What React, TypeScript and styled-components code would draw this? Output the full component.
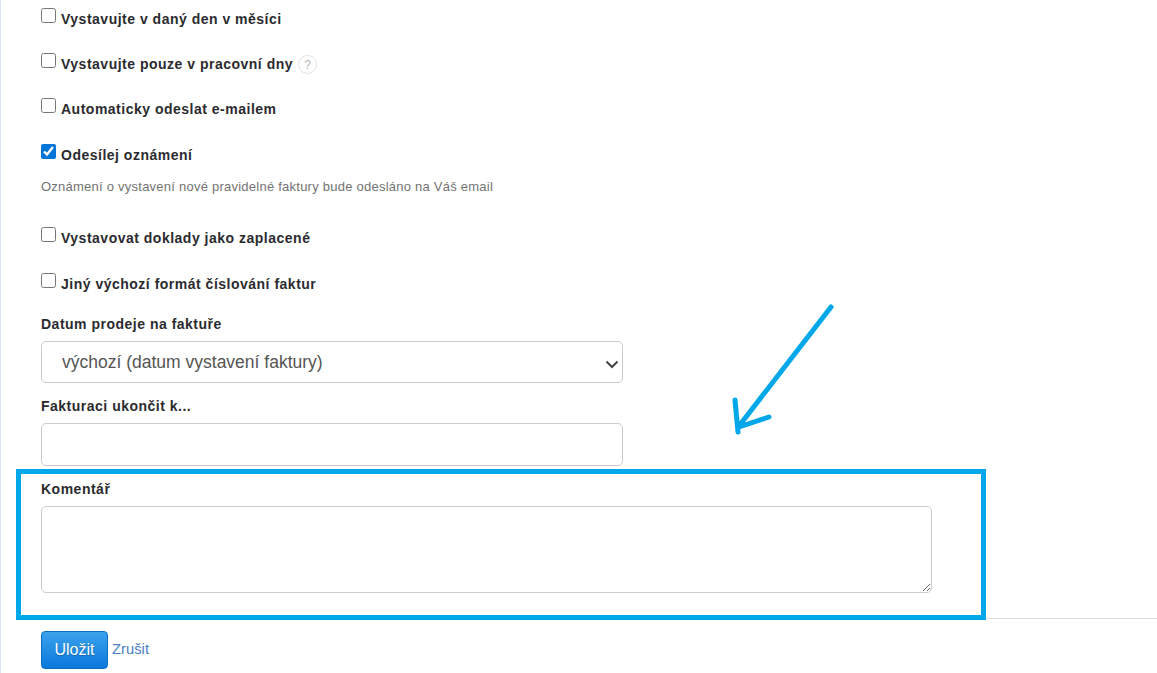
import React from "react";
import styled, { createGlobalStyle } from "styled-components";

const Global = createGlobalStyle`
  html, body { margin: 0; padding: 0; background: #fff; height: 673px; overflow: hidden; }
  * { box-sizing: border-box; }
`;

const Page = styled.div`
  position: relative;
  width: 1157px;
  height: 673px;
  overflow: hidden;
  border-left: 1px solid #dbe5ef;
  font-family: "Liberation Sans", Arial, sans-serif;
  color: #333;
`;

const Form = styled.form`
  display: flex;
  flex-direction: column;
  padding: 0 0 0 40px;
`;

const CheckRow = styled.label<{ $h: number }>`
  display: flex;
  align-items: flex-start;
  height: ${(p) => p.$h}px;
  font-size: 14px;
  font-weight: 700;
  line-height: 20px;
  letter-spacing: 0.5px;
  color: #2b2b2f;
`;

const Check = styled.input.attrs({ type: "checkbox" })`
  width: 15px;
  height: 15px;
  margin: 0 5px 0 0;
  accent-color: #0075d8;
  flex: none;
`;

const RowText = styled.span`
  position: relative;
  top: 1px;
`;

const Help = styled.span`
  display: inline-flex;
  align-items: center;
  justify-content: center;
  width: 19px;
  height: 19px;
  margin: 2px 0 0 5px;
  border: 1px solid #e2e2e2;
  border-radius: 50%;
  font-size: 12px;
  font-weight: 400;
  letter-spacing: 0;
  color: #b5b5b5;
`;

const Hint = styled.p`
  margin: 0;
  height: 50px;
  font-size: 13px;
  line-height: 20px;
  letter-spacing: 0.24px;
  color: #737373;
`;

const FieldLabel = styled.div<{ $h: number }>`
  height: ${(p) => p.$h}px;
  font-size: 14px;
  font-weight: 700;
  line-height: 20px;
  letter-spacing: 0.5px;
  color: #2b2b2f;
`;

const SelectWrap = styled.div`
  position: relative;
  width: 582px;
  height: 42px;
  margin-bottom: 13px;
  padding-left: 20px;
  display: flex;
  align-items: center;
  border: 1px solid #ccc;
  border-radius: 5px;
  font-size: 17.5px;
  color: #555;
  background: #fff;
`;

const Chevron = styled.svg`
  position: absolute;
  right: 2px;
  top: 14px;
  width: 16px;
  height: 16px;
`;

const TextBox = styled.div`
  width: 582px;
  height: 43px;
  margin-bottom: 13px;
  border: 1px solid #ccc;
  border-radius: 5px;
  background: #fff;
`;

const Area = styled.textarea`
  display: block;
  width: 891px;
  height: 87px;
  border: 1px solid #ccc;
  border-radius: 5px;
  background: #fff;
  outline: none;
  padding: 0;
`;

const Divider = styled.hr`
  margin: 25px 0 0 -25px;
  height: 1px;
  border: 0;
  background: #dcdcdc;
`;

const Actions = styled.div`
  display: flex;
  align-items: flex-start;
  gap: 4px;
  margin-top: 12px;
`;

const SaveButton = styled.button`
  width: 67px;
  height: 38px;
  padding: 0;
  border: 1px solid #0b6fc4;
  border-radius: 4px;
  background: linear-gradient(#3ba2ec, #0a78dc);
  color: #fff;
  font-family: inherit;
  font-size: 16px;
  text-shadow: 0 1px 1px rgba(0, 0, 0, 0.25);
`;

const CancelLink = styled.a`
  font-size: 14.8px;
  line-height: 20px;
  margin-top: 8px;
  color: #4a7fc4;
`;

const Highlight = styled.div`
  position: absolute;
  left: 15px;
  top: 469px;
  width: 970px;
  height: 151px;
  border: 5px solid #00a7e9;
  pointer-events: none;
`;

const Arrow = styled.svg`
  position: absolute;
  left: 700px;
  top: 290px;
  width: 150px;
  height: 160px;
`;

export default function App() {
  return (
    <Page>
      <Global />
      <Form>
        <CheckRow $h={45} style={{ marginTop: 8 }}>
          <Check />
          <RowText>Vystavujte v daný den v měsíci</RowText>
        </CheckRow>
        <CheckRow $h={45}>
          <Check />
          <RowText>Vystavujte pouze v pracovní dny</RowText>
          <Help>?</Help>
        </CheckRow>
        <CheckRow $h={46}>
          <Check />
          <RowText>Automaticky odeslat e-mailem</RowText>
        </CheckRow>
        <CheckRow $h={33}>
          <Check defaultChecked />
          <RowText>Odesílej oznámení</RowText>
        </CheckRow>
        <Hint>Oznámení o vystavení nové pravidelné faktury bude odesláno na Váš email</Hint>
        <CheckRow $h={46}>
          <Check />
          <RowText>Vystavovat doklady jako zaplacené</RowText>
        </CheckRow>
        <CheckRow $h={41}>
          <Check />
          <RowText>Jiný výchozí formát číslování faktur</RowText>
        </CheckRow>
        <FieldLabel $h={27}>Datum prodeje na faktuře</FieldLabel>
        <SelectWrap>
          výchozí (datum vystavení faktury)
          <Chevron viewBox="0 0 16 16">
            <path d="M2.5 5.5 L8 11 L13.5 5.5" fill="none" stroke="#444" strokeWidth="2" />
          </Chevron>
        </SelectWrap>
        <FieldLabel $h={27}>Fakturaci ukončit k...</FieldLabel>
        <TextBox />
        <FieldLabel $h={27}>Komentář</FieldLabel>
        <Area />
        <Divider />
        <Actions>
          <SaveButton type="button">Uložit</SaveButton>
          <CancelLink>Zrušit</CancelLink>
        </Actions>
      </Form>
      <Highlight />
      <Arrow viewBox="0 0 150 160">
        <path
          d="M130 17 L38 136 M34 110 L37 142 M38 137 L68 127"
          fill="none"
          stroke="#00a7e9"
          strokeWidth="5"
          strokeLinecap="round"
          strokeLinejoin="round"
        />
      </Arrow>
    </Page>
  );
}
